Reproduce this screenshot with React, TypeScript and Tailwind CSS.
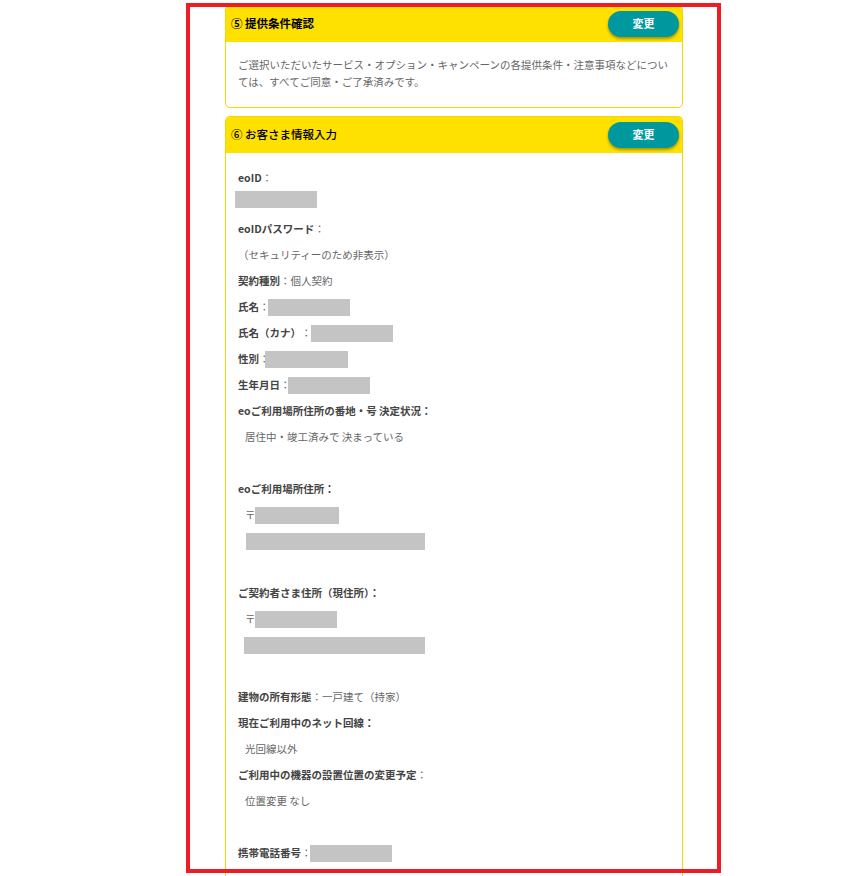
import React from "react";

const font = { fontFamily: '"Noto Sans CJK JP", "Noto Sans", sans-serif' };

function Box({ w }: { w: number }) {
  return <span className="inline-block h-[17px] bg-[#c4c4c4] align-[-5px]" style={{ width: w }} />;
}

function Header({ title, bold }: { title: string; bold?: boolean }) {
  return (
    <div className="flex h-[37px] items-center justify-between bg-[#ffe100] pl-[6px] pr-[4px]">
      <span className={`text-[11.5px] text-black ${bold ? "font-bold" : "font-medium"}`}>{title}</span>
      <button className="h-[26px] w-[71px] rounded-full bg-[#00989f] text-[11px] font-bold text-white shadow-[0_2px_3px_rgba(0,0,0,0.35)]">
        変更
      </button>
    </div>
  );
}

function Row({ children, indent }: { children?: React.ReactNode; indent?: boolean }) {
  return (
    <div className={`flex h-[26px] items-center whitespace-nowrap ${indent ? "pl-[7px]" : ""}`}>{children}</div>
  );
}

const L = ({ children }: { children: React.ReactNode }) => (
  <span className="font-bold text-[#444]">{children}</span>
);
const V = ({ children }: { children: React.ReactNode }) => <span className="text-[#666]">{children}</span>;

export default function App() {
  return (
    <div className="relative h-[876px] w-[845px] overflow-hidden bg-white" style={font}>
      <div className="ml-[225px] w-[458px] pt-[5px]">
        {/* Card 5 */}
        <div className="overflow-hidden rounded-[5px] border border-[#f7d500]">
          <div className="-mx-px -mt-px">
            <Header title="⑤ 提供条件確認" bold />
          </div>
          <div className="px-[12px] pb-[17px] pt-[14px] text-[10.5px] leading-[17px] text-[#666]">
            <div className="whitespace-nowrap">ご選択いただいたサービス・オプション・キャンペーンの各提供条件・注意事項などについ</div>
            <div className="whitespace-nowrap">ては、すべてご同意・ご了承済みです。</div>
          </div>
        </div>

        {/* Card 6 */}
        <div className="mt-[8px] h-[800px] overflow-hidden rounded-t-[5px] border border-b-0 border-[#f7d500]">
          <div className="-mx-px -mt-px">
            <Header title="⑥ お客さま情報入力" />
          </div>
          <div className="pl-[12px] pt-[12px] text-[10.5px]">
            <Row><L>eoID</L><V>：</V></Row>
            <div className="-ml-[3px] -mt-[1px] h-[26px] pt-[1px]"><Box w={82} /></div>
            <Row><L>eoIDパスワード</L><V>：</V></Row>
            <Row><V>（セキュリティーのため非表示）</V></Row>
            <Row><L>契約種別</L><V>：個人契約</V></Row>
            <Row><L>氏名</L><V>：</V><span className="-ml-[2px]"><Box w={82} /></span></Row>
            <Row><L>氏名（カナ）</L><V>：</V><span className="-ml-[1px]"><Box w={82} /></span></Row>
            <Row><L>性別</L><V>：</V><span className="-ml-[5px]"><Box w={83} /></span></Row>
            <Row><L>生年月日</L><V>：</V><span className="-ml-[3px]"><Box w={82} /></span></Row>
            <Row><L>eoご利用場所住所の番地・号 決定状況：</L></Row>
            <Row indent><V>居住中・竣工済みで 決まっている</V></Row>
            <Row />
            <Row><L>eoご利用場所住所：</L></Row>
            <Row indent><V>〒</V><span className="-ml-[1px]"><Box w={84} /></span></Row>
            <Row indent><span className="ml-[1px]"><Box w={179} /></span></Row>
            <Row />
            <Row><L>ご契約者さま住所（現住所）：</L></Row>
            <Row indent><V>〒</V><span className="-ml-[1px]"><Box w={82} /></span></Row>
            <Row indent><span className="-ml-[1px]"><Box w={181} /></span></Row>
            <Row />
            <Row><L>建物の所有形態</L><V>：一戸建て（持家）</V></Row>
            <Row><L>現在ご利用中のネット回線：</L></Row>
            <Row indent><V>光回線以外</V></Row>
            <Row><L>ご利用中の機器の設置位置の変更予定</L><V>：</V></Row>
            <Row indent><V>位置変更 なし</V></Row>
            <Row />
            <Row><L>携帯電話番号</L><V>：</V><span className="-ml-[2px]"><Box w={82} /></span></Row>
          </div>
        </div>
      </div>

      {/* red annotation frame */}
      <div className="pointer-events-none absolute left-[186px] top-[3px] h-[870px] w-[535px] border-[4px] border-[#ee1c25]" />
    </div>
  );
}
